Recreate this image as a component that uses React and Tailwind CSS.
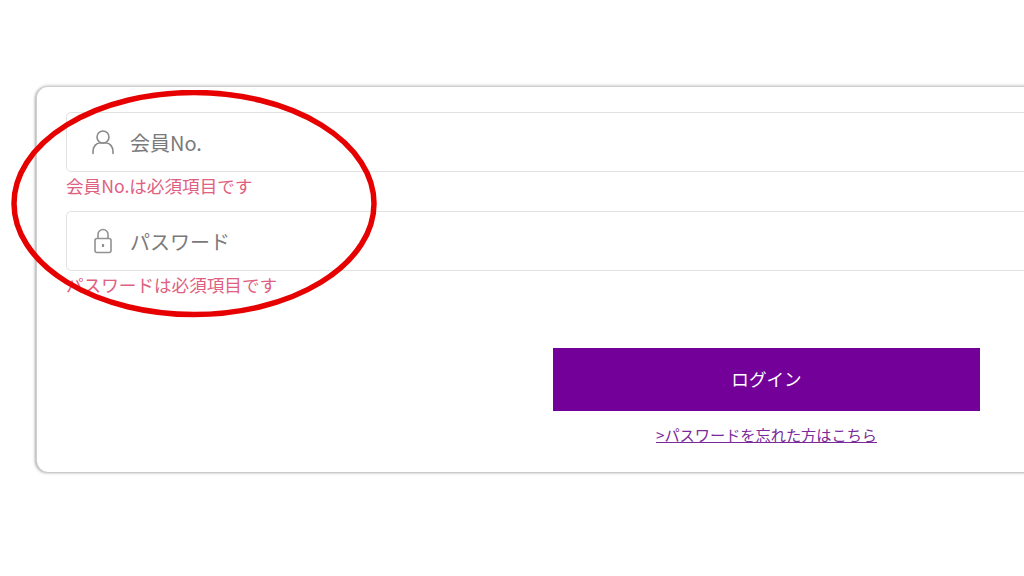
import React from 'react'

const jp = { fontFamily: '"Noto Sans CJK JP", "Noto Sans", sans-serif' }

function UserIcon() {
  return (
    <svg width="24" height="26" viewBox="0 0 24 26" fill="none" stroke="#8a8a8a" strokeWidth="1.6" strokeLinecap="round">
      <circle cx="12" cy="8" r="6" />
      <path d="M2 24.500v-2c0-5 3.500-8.500 6.500-8.500h7c3 0 6.500 3.500 6.500 8.500v2" />
    </svg>
  )
}

function LockIcon() {
  return (
    <svg width="20" height="26" viewBox="0 0 20 26" fill="none" stroke="#929292" strokeWidth="1.6">
      <rect x="2" y="10.500" width="16" height="14" rx="2" />
      <path d="M5 10.500V6.500a5 5 0 0 1 10 0v4" />
      <path d="M10 16v3" strokeWidth="2.200" />
    </svg>
  )
}

function Field({ icon, label, error }) {
  return (
    <div className="flex flex-col">
      <div className="flex h-[60px] items-center rounded-[5px] border border-[#e2e2e2] bg-white">
        <div className="flex w-[63px] justify-center pl-[8px]">{icon}</div>
        <span className="pt-[1px] text-[20px] text-[#7a7a7a]">{label}</span>
      </div>
      <p className="h-[27px] text-[17.600px] leading-[27px] text-[#e0607f]">{error}</p>
    </div>
  )
}

export default function App() {
  return (
    <div className="relative h-[576px] w-[1024px] overflow-hidden bg-white pl-[36px] pt-[86px]" style={jp}>
      <div className="h-[386px] w-[1100px] rounded-[12px] border-t border-l border-[#d0d0d0] bg-white pl-[29px] pr-[70px] pt-[25px] shadow-[-1px_1px_3px_rgba(0,0,0,0.3),0_-1px_3px_rgba(0,0,0,0.12)]">
        <div className="flex flex-col gap-[12px]">
          <Field icon={<UserIcon />} label="会員No." error="会員No.は必須項目です" />
          <Field icon={<LockIcon />} label="パスワード" error="パスワードは必須項目です" />
        </div>
        <div className="ml-[487px] mt-[50px] flex w-[427px] flex-col items-center">
          <button className="flex h-[63px] w-full items-center justify-center bg-[#720099] text-[17.600px] text-white">
            ログイン
          </button>
          <a href="#" className="mt-[12px] text-[15.200px] leading-[22px] text-[#7a2a9a] underline">
            &gt;パスワードを忘れた方はこちら
          </a>
        </div>
      </div>
      <svg className="pointer-events-none absolute left-[10px] top-[90px]" width="368" height="228" viewBox="0 0 368 228" fill="none">
        <ellipse cx="184" cy="113.500" rx="180" ry="111" stroke="#e60000" strokeWidth="5.500" />
      </svg>
    </div>
  )
}
